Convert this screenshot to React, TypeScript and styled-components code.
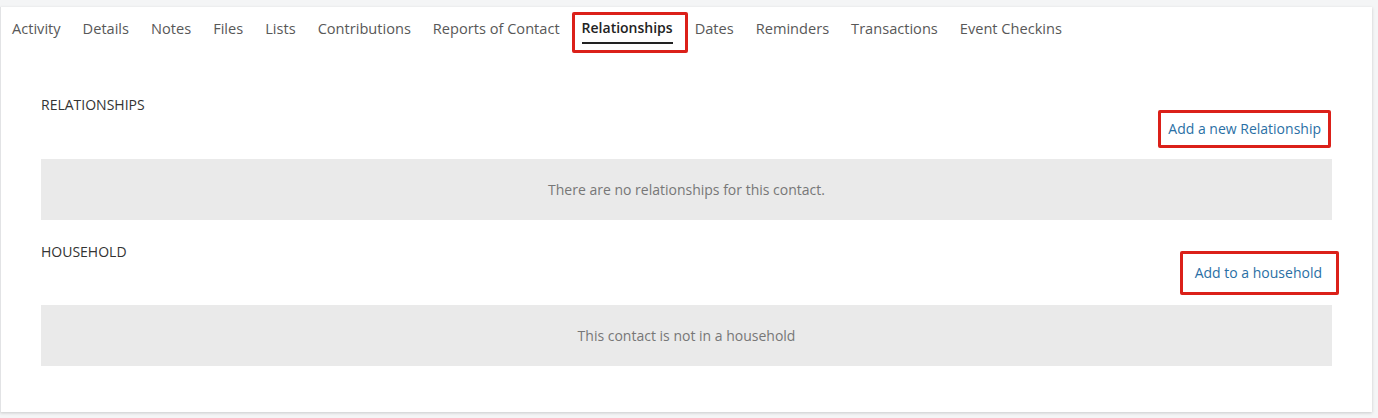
import React from 'react';
import styled, { createGlobalStyle } from 'styled-components';

const tabs = [
  'Activity',
  'Details',
  'Notes',
  'Files',
  'Lists',
  'Contributions',
  'Reports of Contact',
  'Relationships',
  'Dates',
  'Reminders',
  'Transactions',
  'Event Checkins',
];

const App = () => {
  return (
    <Page>
      <GlobalStyle />
      <Card>
        <TabBar>
          {tabs.map(tab => (
            <Tab key={tab} $active={tab === 'Relationships'}>
              {tab}
            </Tab>
          ))}
        </TabBar>

        <Body>
          <Section>
            <HeaderRow>
              <Heading>RELATIONSHIPS</Heading>
            </HeaderRow>
            <LinkRow $top={-5} $gap={11}>
              <MarkedLink href="#" $padX={[7, 7]} $padY={6} $right={1}>
                Add a new Relationship
              </MarkedLink>
            </LinkRow>
            <EmptyBox>There are no relationships for this contact.</EmptyBox>
          </Section>

          <Section>
            <HeaderRow>
              <Heading>HOUSEHOLD</Heading>
            </HeaderRow>
            <LinkRow $top={-11} $gap={10}>
              <MarkedLink href="#" $padX={[12, 14]} $padY={9} $right={-7}>
                Add to a household
              </MarkedLink>
            </LinkRow>
            <EmptyBox>This contact is not in a household</EmptyBox>
          </Section>
        </Body>
      </Card>
    </Page>
  );
};

const GlobalStyle = createGlobalStyle`
  body {
    margin: 0;
    background: #f4f5f6;
    font-family: 'Open Sans', 'Noto Sans', sans-serif;
  }
`;

const Page = styled.div`
  padding: 7px 6px 6px 0;
  height: 418px;
  box-sizing: border-box;
`;

const Card = styled.div`
  background: #ffffff;
  height: 405px;
  box-shadow: 0 1px 3px rgba(0, 0, 0, 0.18);
  border-left: 1px solid #e2e3e5;
  box-sizing: border-box;
`;

const TabBar = styled.div`
  display: flex;
`;

const Tab = styled.div<{ $active?: boolean }>`
  position: relative;
  margin: 0 11px;
  padding: 11px 0 4px;
  font-size: ${props => (props.$active ? '14px' : '14.6px')};
  line-height: 20px;
  font-weight: ${props => (props.$active ? 600 : 400)};
  color: ${props => (props.$active ? '#222' : '#585858')};
  border-bottom: 2px solid ${props => (props.$active ? '#222' : 'transparent')};
  cursor: pointer;

  ${props =>
    props.$active &&
    `
    &::after {
      content: '';
      position: absolute;
      top: 5px;
      bottom: -11px;
      left: -10px;
      right: -15px;
      border: 3px solid #db2019;
      border-radius: 2px;
    }
  `}
`;

const Body = styled.div`
  padding: 51px 40px 0 40px;
`;

const Section = styled.div`
  margin-bottom: 22px;
`;

const HeaderRow = styled.div`
  display: flex;
  align-items: flex-start;
`;

const Heading = styled.div`
  font-size: 14px;
  line-height: 20px;
  color: #333;
`;

const LinkRow = styled.div<{ $top: number; $gap: number }>`
  display: flex;
  justify-content: flex-end;
  margin-top: ${props => props.$top}px;
  margin-bottom: ${props => props.$gap}px;
`;

const MarkedLink = styled.a<{
  $padX: [number, number];
  $padY: number;
  $right: number;
}>`
  display: inline-block;
  padding: ${props =>
    `${props.$padY}px ${props.$padX[1]}px ${props.$padY}px ${props.$padX[0]}px`};
  margin-right: ${props => props.$right}px;
  border: 3px solid #db2019;
  border-radius: 2px;
  font-size: 14px;
  line-height: 20px;
  color: #2a6fa5;
  text-decoration: none;
`;

const EmptyBox = styled.div`
  background: #eaeaea;
  height: 61px;
  display: flex;
  align-items: center;
  justify-content: center;
  font-size: 14px;
  color: #777;
`;

export default App;
